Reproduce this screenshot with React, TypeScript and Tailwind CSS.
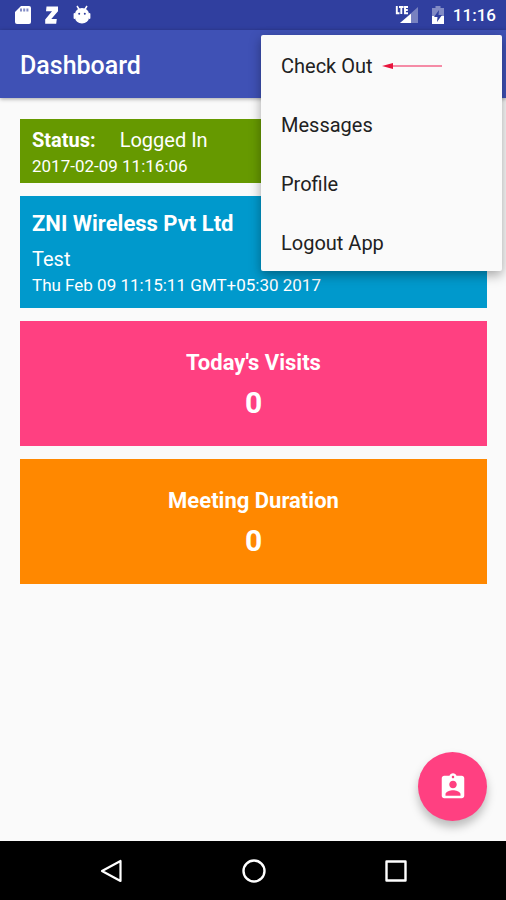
import { useState } from "react";

const MENU_ITEMS = ["Check Out", "Messages", "Profile", "Logout App"];

const STATS = [
  { label: "Today's Visits", value: 0, color: "bg-[#ff4081]" },
  { label: "Meeting Duration", value: 0, color: "bg-[#ff8800]" },
];

function StatusBar() {
  return (
    <div className="flex h-[30px] items-center bg-[#303f9f] px-[10px] text-white">
      <div className="flex flex-1 items-center gap-3 pl-1">
        {/* SD card */}
        <svg className="h-5 w-[18px]" viewBox="0 0 18 20" fill="currentColor">
          <path d="M7 1H15a2 2 0 0 1 2 2v14a2 2 0 0 1-2 2H3a2 2 0 0 1-2-2V7z" />
          <path d="M7 3.500v3M10.200 3.500v3M13.400 3.500v3" stroke="#303f9f" strokeWidth="2" opacity=".6" />
        </svg>
        {/* Z app notification */}
        <svg className="h-5 w-4" viewBox="0 0 16 20" fill="currentColor">
          <path d="M2.500 1.500H14v4.700L7.300 14H12.800l-.6 4.700H1.200v-4.200L8 6.300H2z" />
        </svg>
        {/* Android debug */}
        <svg className="ml-px h-5 w-[18px]" viewBox="0 0 18 20" fill="currentColor">
          <path d="M4 1l2.200 3.500M14 1l-2.200 3.500" stroke="currentColor" strokeWidth="1.500" />
          <path
            fillRule="evenodd"
            d="M2 9a7 6 0 0 1 14 0v3.500a7 6 0 0 1-14 0zM6.200 7.800a1 1 0 1 0 0 2 1 1 0 0 0 0-2zM11.800 7.800a1 1 0 1 0 0 2 1 1 0 0 0 0-2z"
          />
          <path d="M1.500 9v4M16.500 9v4" stroke="currentColor" strokeWidth="1.800" strokeLinecap="round" />
        </svg>
      </div>
      <div className="flex items-center gap-2">
        {/* LTE signal */}
        <svg className="h-5 w-6" viewBox="0 0 24 20" fill="none">
          <path d="M23 2v16H5z" fill="#fff" opacity=".35" />
          <path d="M16 8.800V18H5z" fill="#fff" />
          <path d="M1.800 1v7.200H4.500M4 2h4.600M6.300 2v7M13 2H10v6.200H13M10 5h2.800" stroke="#fff" strokeWidth="1.900" />
        </svg>
        {/* Battery */}
        <svg className="ml-1 h-5 w-[14px]" viewBox="0 0 14 20" fill="none">
          <path d="M4.500 1h5v2H13v16H1V3h3.500z" fill="#fff" opacity=".4" />
          <path d="M1 11h12v8H1z" fill="#fff" />
          <path d="M8 5l-5 7h3.500L6 17l5-7H7.500z" fill="#303f9f" />
        </svg>
        <span className="text-[17px] leading-5 font-medium">11:16</span>
      </div>
    </div>
  );
}

function OverflowMenu({ onSelect }: { onSelect: () => void }) {
  return (
    <div
      role="menu"
      className="absolute top-[35px] right-1 z-10 w-[241px] rounded-xs bg-[#fafafa] shadow-[0_4px_12px_rgba(0,0,0,0.35)]"
    >
      {MENU_ITEMS.map((item, i) => (
        <button
          key={item}
          role="menuitem"
          onClick={onSelect}
          className="flex h-[59px] w-full items-center gap-2 px-5 pt-0.5 text-left text-xl leading-6 text-[#212121]"
        >
          {item}
          {i === 0 && (
            <svg className="h-2 w-[62px]" viewBox="0 0 62 8">
              <path d="M11 4h50" stroke="#f58ba6" strokeWidth="2" />
              <path d="M1 4l11-3v6z" fill="#e8143c" />
            </svg>
          )}
        </button>
      ))}
    </div>
  );
}

function NavBar() {
  return (
    <nav className="flex h-[59px] items-center justify-center gap-[114px] bg-black pl-0.5 text-white">
      <button aria-label="Back">
        <svg className="h-7 w-7" viewBox="0 0 28 28" fill="none" stroke="currentColor" strokeWidth="2.200" strokeLinejoin="round">
          <path d="M22.500 4v20L4 14z" />
        </svg>
      </button>
      <button aria-label="Home">
        <svg className="h-7 w-7" viewBox="0 0 28 28" fill="none" stroke="currentColor" strokeWidth="2.400">
          <circle cx="14" cy="14" r="10.500" />
        </svg>
      </button>
      <button aria-label="Recent apps">
        <svg className="h-7 w-7" viewBox="0 0 28 28" fill="none" stroke="currentColor" strokeWidth="2.400" strokeLinejoin="round">
          <path d="M4.500 4.500h19v19h-19z" />
        </svg>
      </button>
    </nav>
  );
}

export default function App() {
  const [menuOpen, setMenuOpen] = useState(true);

  return (
    <div className="relative flex min-h-screen flex-col bg-[#fafafa] font-[Roboto,sans-serif]">
      <StatusBar />
      <header className="flex h-[68px] items-center bg-[#3f51b5] px-5 pt-1 shadow-[0_1px_4px_rgba(0,0,0,0.35)]">
        <h1 className="text-[25px] leading-8 font-medium text-white">Dashboard</h1>
      </header>
      {menuOpen && <OverflowMenu onSelect={() => setMenuOpen(false)} />}

      <main className="flex flex-1 flex-col gap-[13px] pt-[21px] pr-[19px] pb-5 pl-5 text-white">
        <section className="bg-[#669900] px-3 pt-[7px] pb-[5px]">
          <p className="flex gap-6 text-xl leading-7">
            <span className="font-bold">Status:</span>
            <span>Logged In</span>
          </p>
          <p className="text-[17px] leading-6">2017-02-09 11:16:06</p>
        </section>

        <section className="bg-[#0099cc] px-3 pt-3 pb-3">
          <h2 className="text-[22px] leading-8 font-bold">ZNI Wireless Pvt Ltd</h2>
          <p className="pt-1 text-xl leading-[30px]">Test</p>
          <p className="text-[17px] leading-[22px]">Thu Feb 09 11:15:11 GMT+05:30 2017</p>
        </section>

        {STATS.map((stat) => (
          <section key={stat.label} className={`px-3 pt-[26px] pb-[23px] text-center font-bold ${stat.color}`}>
            <h2 className="text-[22px] leading-8">{stat.label}</h2>
            <p className="pt-1 text-[30px] leading-10">{stat.value}</p>
          </section>
        ))}

        <button
          aria-label="Contacts"
          className="mt-auto flex h-[69px] w-[69px] items-center justify-center self-end rounded-full bg-[#ff4081] shadow-[0_6px_10px_rgba(0,0,0,0.25)]"
        >
          <svg className="h-[30px] w-[30px]" viewBox="0 0 24 24" fill="currentColor">
            <path d="M19 3h-4.180C14.400 1.840 13.300 1 12 1c-1.300 0-2.400.84-2.820 2H5c-1.100 0-2 .9-2 2v14c0 1.100.9 2 2 2h14c1.100 0 2-.9 2-2V5c0-1.100-.9-2-2-2zm-7 0c.55 0 1 .45 1 1s-.45 1-1 1-1-.45-1-1 .45-1 1-1zm0 4c1.660 0 3 1.340 3 3s-1.340 3-3 3-3-1.340-3-3 1.340-3 3-3zm6 12H6v-1.400c0-2 4-3.100 6-3.100s6 1.100 6 3.100V19z" />
          </svg>
        </button>
      </main>

      <NavBar />
    </div>
  );
}
